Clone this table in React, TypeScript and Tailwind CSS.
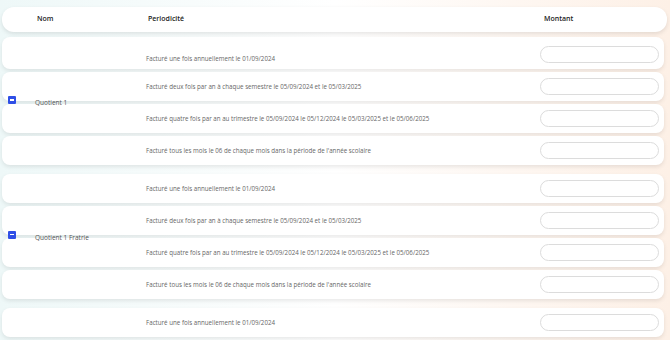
import React from "react";

const periods = [
  "Facturé une fois annuellement le 01/09/2024",
  "Facturé deux fois par an à chaque semestre le 05/09/2024 et le 05/03/2025",
  "Facturé quatre fois par an au trimestre le 05/09/2024 le 05/12/2024 le 05/03/2025 et le 05/06/2025",
  "Facturé tous les mois le 06 de chaque mois dans la période de l'année scolaire",
];

const groups = [
  { name: "Quotient 1", count: 4, first: true },
  { name: "Quotient 1 Fratrie", count: 4, first: false },
  { name: "", count: 1, first: false },
];

const rowStart = ["row-start-1", "row-start-2", "row-start-3", "row-start-4"];

function MinusBox() {
  return (
    <span className="flex h-[8px] w-[8px] items-center justify-center rounded-[1px] bg-[#2f4fe6]">
      <span className="h-[1.5px] w-[4px] bg-white" />
    </span>
  );
}

export default function App() {
  return (
    <div
      className="h-[340px] w-[670px] overflow-hidden bg-gradient-to-r from-[#eef8f8] via-white to-[#fdf0e6] px-[2px] pt-[7px] text-[#555]"
      style={{ fontFamily: '"Open Sans", "Noto Sans", sans-serif' }}
    >
      <div className="mr-[1px] flex h-[25px] items-center rounded-[12px] bg-white text-[7px] font-semibold text-[#222] shadow-[0_2px_4px_rgba(0,0,0,0.10)]">
        <div className="w-[146px] pl-[35px]">Nom</div>
        <div className="flex-1">Periodicité</div>
        <div className="w-[125px] pl-[2px]">Montant</div>
      </div>

      <div className="mt-[5px] mr-[4px] flex flex-col gap-[9px]">
        {groups.map((g, gi) => (
          <div
            key={gi}
            className={
              g.count === 4
                ? g.first
                  ? "grid grid-cols-[144px_1fr] grid-rows-[32px_29px_29px_29px] gap-y-[3px]"
                  : "grid grid-cols-[144px_1fr] grid-rows-[29px_29px_29px_29px] gap-y-[3px]"
                : "grid grid-cols-[144px_1fr] grid-rows-[29px] gap-y-[3px]"
            }
          >
            {periods.slice(0, g.count).map((p, i) => (
              <div
                key={i}
                className={`${rowStart[i]} col-span-2 col-start-1 flex items-center rounded-[8px] bg-white shadow-[0_2px_4px_rgba(0,0,0,0.09)]`}
              >
                <div className="w-[144px]" />
                <div className={g.first && i === 0 ? "flex-1 pt-[11px] text-[6.2px] text-[#666]" : "flex-1 text-[6.2px] text-[#666]"}>{p}</div>
                <div className={g.first && i === 0 ? "mr-[5px] mt-[3px] h-[17px] w-[119px] rounded-full border border-[#dcdcdc] bg-white" : "mr-[5px] h-[17px] w-[119px] rounded-full border border-[#dcdcdc] bg-white"} />
              </div>
            ))}
            {g.name && (
              <div
                className={
                  g.first
                    ? "z-10 col-start-1 row-span-4 row-start-1 mt-[4px] flex items-center self-center pl-[6px] text-[6.5px] text-[#555]"
                    : "z-10 col-start-1 row-span-4 row-start-1 mt-[2px] flex items-center self-center pl-[6px] text-[6.5px] text-[#555]"
                }
              >
                <div className="-mt-[6px]">
                  <MinusBox />
                </div>
                <span className="ml-[19px]">{g.name}</span>
              </div>
            )}
          </div>
        ))}
      </div>
    </div>
  );
}
